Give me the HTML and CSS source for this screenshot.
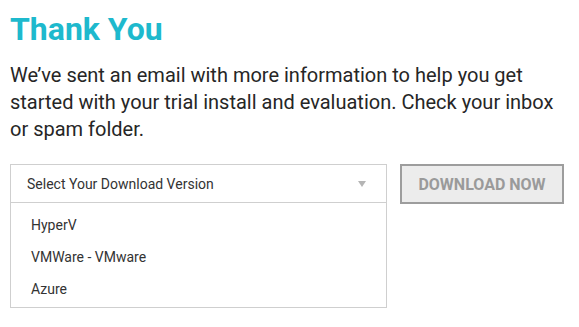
FILE: index.html
```html
<!DOCTYPE html>
<html>
<head>
<meta charset="utf-8">
<link rel="stylesheet" href="styles.css">
</head>
<body>
<div class="page">
  <h1 class="title">Thank You</h1>
  <p class="intro">We’ve sent an email with more information to help you get<br>started with your trial install and evaluation. Check your inbox or spam folder.</p>
  <div class="row">
    <div class="dropdown">
      <div class="select">
        <span>Select Your Download Version</span>
        <span class="arrow"></span>
      </div>
      <ul class="options">
        <li>HyperV</li>
        <li>VMWare - VMware</li>
        <li>Azure</li>
      </ul>
    </div>
    <button class="download">DOWNLOAD NOW</button>
  </div>
</div>
</body>
</html>
```
FILE: styles.css
```css
html, body {
  margin: 0;
  padding: 0;
  background: #ffffff;
}
body {
  font-family: Roboto, "Liberation Sans", sans-serif;
  color: #222;
}
.page {
  padding: 9px 10px 0 10px;
}
.title {
  margin: 0;
  font-size: 32px;
  font-weight: 700;
  color: #1eb9cd;
  line-height: 40px;
}
.intro {
  margin: 13px 0 0 0;
  font-size: 20px;
  line-height: 27px;
  color: #262626;
  width: 559px;
}
.row {
  display: flex;
  align-items: flex-start;
  gap: 13px;
  margin-top: 21px;
}
.dropdown {
  width: 377px;
  border: 1px solid #cfcfcf;
  box-sizing: border-box;
}
.select {
  height: 37px;
  border-bottom: 1px solid #cfcfcf;
  display: flex;
  align-items: center;
  justify-content: space-between;
  padding: 0 20px 0 16px;
  font-size: 14px;
  color: #333;
}
.arrow {
  width: 0;
  height: 0;
  border-left: 4px solid transparent;
  border-right: 4px solid transparent;
  border-top: 6px solid #b5b5b5;
}
.options {
  list-style: none;
  margin: 0;
  padding: 6px 0 2px 20px;
}
.options li {
  font-size: 14px;
  line-height: 32px;
  color: #333;
}
.download {
  width: 164px;
  height: 40px;
  background: #ececec;
  border: 2px solid #9d9d9d;
  color: #9a9a9a;
  font-family: Roboto, "Liberation Sans", sans-serif;
  font-weight: 700;
  font-size: 16px;
  padding: 0;
}
```
